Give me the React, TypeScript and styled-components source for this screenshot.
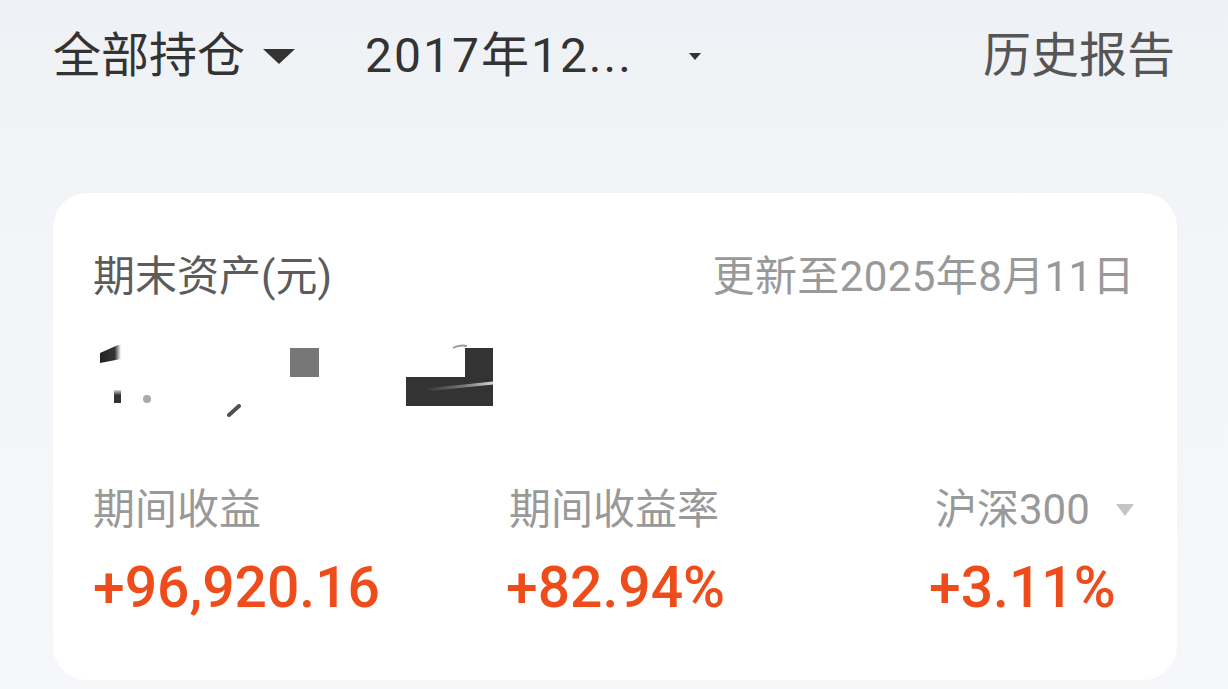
import React from 'react';
import styled, { createGlobalStyle } from 'styled-components';

const GlobalStyle = createGlobalStyle`
  html, body {
    margin: 0;
    padding: 0;
  }

  body {
    background: linear-gradient(180deg, #eef1f5 0%, #f4f5f8 40%, #f6f7f9 100%);
    font-family: Roboto, "Noto Sans CJK SC", sans-serif;
    min-height: 689px;
  }
`;

const Page = styled.div`
  box-sizing: border-box;
  min-height: 689px;
  padding: 23px 51px 0 53px;
`;

const Header = styled.div`
  align-items: center;
  display: flex;
  height: 66px;
`;

const Select = styled.div<{ $width?: number, $spacing?: number }>`
  align-items: center;
  color: #333;
  display: flex;
  font-size: 48px;
  letter-spacing: ${(p) => p.$spacing || 0}px;
  line-height: 66px;
  width: ${(p) => (p.$width ? `${p.$width}px` : 'auto')};
`;

const Caret = styled.span<{ $w: number, $h: number, $color: string, $gap: number }>`
  border-left: ${(p) => p.$w / 2}px solid transparent;
  border-right: ${(p) => p.$w / 2}px solid transparent;
  border-top: ${(p) => p.$h}px solid ${(p) => p.$color};
  display: inline-block;
  height: 0;
  margin-left: ${(p) => p.$gap}px;
  width: 0;
`;

const HistoryLink = styled.div`
  color: #555;
  font-size: 48px;
  line-height: 66px;
  margin-left: auto;
  margin-right: 2px;
`;

const Card = styled.div`
  background: #fff;
  border-radius: 34px;
  margin-top: 104px;
  padding: 55px 42px 58px 40px;
`;

const TitleRow = styled.div`
  display: flex;
  font-size: 42px;
  justify-content: space-between;
  line-height: 58px;
`;

const Title = styled.div`
  color: #5c5c5c;
`;

const Updated = styled.div`
  color: #999;
  letter-spacing: 0.4px;
`;

const Masked = styled.svg`
  display: block;
  margin-top: 34px;
`;

const Stats = styled.div`
  display: grid;
  grid-template-columns: 416px 426px 1fr;
  margin-top: 61px;
`;

const Stat = styled.div`
  display: flex;
  flex-direction: column;
`;

const Label = styled.div`
  align-items: center;
  color: #999;
  display: flex;
  font-size: 42px;
  line-height: 58px;
`;

const Value = styled.div<{ $shift?: number }>`
  color: #ef4c1c;
  font-size: 57px;
  font-weight: 500;
  line-height: 68px;
  margin-left: ${(p) => p.$shift || 0}px;
  margin-top: 15px;
`;

type StatItem = {
  label: string,
  value: string,
  caret?: boolean,
  shift?: number
};

const stats: StatItem[] = [
  { label: '期间收益', value: '+96,920.16' },
  { label: '期间收益率', value: '+82.94%', shift: -3 },
  { label: '沪深300', value: '+3.11%', caret: true, shift: -6 }
];

function MaskedAmount () {
  // the amount is hidden in the source, drawn as the leftover smudges
  return (
    <Masked width='420' height='80' viewBox='0 0 420 80'>
      <defs>
        <linearGradient id='fadeR' x1='0' x2='1' y1='0' y2='0'>
          <stop offset='0' stopColor='#222' />
          <stop offset='0.7' stopColor='#333' />
          <stop offset='1' stopColor='#333' stopOpacity='0' />
        </linearGradient>
        <linearGradient id='fadeV' x1='0' x2='0' y1='0' y2='1'>
          <stop offset='0' stopColor='#333' stopOpacity='0.2' />
          <stop offset='0.4' stopColor='#333' />
          <stop offset='1' stopColor='#333' />
        </linearGradient>
        <linearGradient id='streak' x1='0' x2='1' y1='0' y2='0'>
          <stop offset='0' stopColor='#fff' stopOpacity='0' />
          <stop offset='0.6' stopColor='#fff' stopOpacity='0.35' />
          <stop offset='1' stopColor='#fff' stopOpacity='0.8' />
        </linearGradient>
      </defs>
      <polygon points='7,13 25,5 28,5 28,19 7,23' fill='url(#fadeR)' />
      <rect x='21' y='50' width='7' height='13' fill='url(#fadeV)' />
      <circle cx='54' cy='59' r='4' fill='#555' opacity='0.5' />
      <path d='M136 75 L146 66' stroke='#333' strokeWidth='4' strokeLinecap='round' opacity='0.85' />
      <rect x='197' y='8' width='29' height='29' fill='#777' />
      <rect x='313' y='37' width='87' height='29' fill='#333' />
      <rect x='372' y='8' width='28' height='29' fill='#333' />
      <path d='M360 8 A14 8 0 0 1 374 6' stroke='#999' strokeWidth='2' fill='none' />
      <path d='M332 50 L400 43' stroke='url(#streak)' strokeWidth='3' />
    </Masked>
  );
}

export default function App () {
  return (
    <>
      <GlobalStyle />
      <Page>
        <Header>
          <Select $width={312}>
            全部持仓
            <Caret $w={32} $h={15} $color='#333' $gap={18} />
          </Select>
          <Select $spacing={2}>
            2017年12...
            <Caret $w={13} $h={7} $color='#333' $gap={56} />
          </Select>
          <HistoryLink>历史报告</HistoryLink>
        </Header>
        <Card>
          <TitleRow>
            <Title>期末资产(元)</Title>
            <Updated>更新至2025年8月11日</Updated>
          </TitleRow>
          <MaskedAmount />
          <Stats>
            {stats.map((s) => (
              <Stat key={s.label}>
                <Label>
                  {s.label}
                  {s.caret && <Caret $w={19} $h={12} $color='#c4c4c4' $gap={26} />}
                </Label>
                <Value $shift={s.shift}>{s.value}</Value>
              </Stat>
            ))}
          </Stats>
        </Card>
      </Page>
    </>
  );
}
